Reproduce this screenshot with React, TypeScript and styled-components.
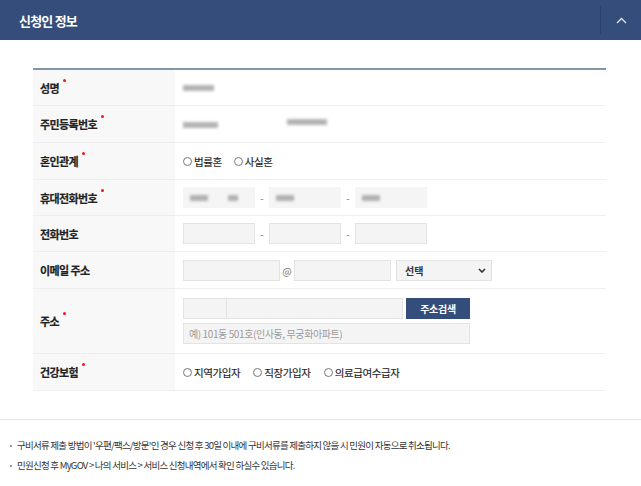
import React from 'react';
import styled, { createGlobalStyle } from 'styled-components';

const GlobalStyle = createGlobalStyle`
  html, body {
    margin: 0;
    padding: 0;
    background: #fff;
    font-family: "Noto Sans CJK KR", "Noto Sans", sans-serif;
    color: #333;
  }
`;

const Page = styled.div`
  width: 641px;
  height: 486px;
  overflow: hidden;
  background: #fff;
`;

const Header = styled.div`
  height: 40px;
  background: #344d7b;
  display: flex;
  align-items: center;
  justify-content: space-between;
`;

const Title = styled.h2`
  margin: 0 0 0 19px;
  font-size: 13px;
  font-weight: 700;
  color: #fff;
  letter-spacing: -0.8px;
`;

const Toggle = styled.button`
  width: 41px;
  height: 28px;
  border: 0;
  border-left: 1px solid #2b4270;
  background: transparent;
  display: flex;
  align-items: center;
  justify-content: center;
  padding: 0;
  color: #e4e9f2;
`;

const Body = styled.div`
  padding: 28px 35px 28px 33px;
  border-bottom: 1px solid #e6e6e6;
`;

const Table = styled.div`
  border-top: 2px solid #8593ab;
`;

const Row = styled.div<{ $h?: number }>`
  box-sizing: border-box;
  display: grid;
  grid-template-columns: 142px 1fr;
  height: ${(p) => p.$h ?? 36}px;
  border-bottom: 1px solid #eeeeee;
`;

const Label = styled.div<{ $req?: boolean }>`
  background: #f8f8f8;
  display: flex;
  align-items: center;
  padding-left: 7px;
  font-size: 11px;
  font-weight: 700;
  color: #222;
  letter-spacing: -0.6px;
  -webkit-text-stroke: 0.2px #222;

  span {
    position: relative;
  }

  span::after {
    content: '';
    display: ${(p) => (p.$req ? 'block' : 'none')};
    position: absolute;
    right: -7px;
    top: -1px;
    width: 3px;
    height: 3px;
    border-radius: 50%;
    background: #f0141e;
  }
`;

const Cell = styled.div<{ $col?: boolean }>`
  display: flex;
  flex-direction: ${(p) => (p.$col ? 'column' : 'row')};
  align-items: ${(p) => (p.$col ? 'flex-start' : 'center')};
  justify-content: ${(p) => (p.$col ? 'center' : 'flex-start')};
  padding-left: 8px;
  gap: ${(p) => (p.$col ? '4px' : '0')};
  font-size: 10px;
  color: #444;
`;

const Blur = styled.span<{ $w: number; $dy?: number }>`
  display: inline-block;
  width: ${(p) => p.$w}px;
  height: 6px;
  background: #9a9a9a;
  filter: blur(1.6px);
  opacity: 0.75;
  margin-top: ${(p) => p.$dy ?? 0}px;
`;

const Input = styled.div<{ $w: number }>`
  box-sizing: border-box;
  width: ${(p) => p.$w}px;
  height: 21px;
  background: #f4f4f4;
  border: 1px solid #e3e3e3;
  display: flex;
  align-items: center;
  padding-left: 5px;
  font-size: 10px;
  color: #9a9a9a;
  letter-spacing: -0.4px;
`;

const FadedInput = styled(Input)`
  background: #f5f5f5;
  border-color: #f5f5f5;
  gap: 20px;
  padding-left: 6px;
`;

const Sep = styled.span<{ $w: number }>`
  width: ${(p) => p.$w}px;
  text-align: center;
  font-size: 10px;
  color: #777;
`;

const Select = styled.div`
  box-sizing: border-box;
  width: 96px;
  height: 21px;
  margin-left: 5px;
  background: #f4f4f4;
  border: 1px solid #e3e3e3;
  display: flex;
  align-items: center;
  justify-content: space-between;
  padding: 0 5px 0 8px;
  font-size: 10px;
  font-weight: 700;
  color: #333;
`;

const Line = styled.div`
  display: flex;
  align-items: center;
`;

const SearchButton = styled.button`
  width: 64px;
  height: 21px;
  margin-left: 3px;
  border: 0;
  background: #344d7b;
  color: #fff;
  font-family: inherit;
  font-size: 10px;
  font-weight: 700;
  letter-spacing: -0.3px;
  padding: 0;
`;

const Radios = styled.div<{ $gap: number }>`
  display: flex;
  align-items: center;
  gap: ${(p) => p.$gap}px;
`;

const Radio = styled.label`
  display: flex;
  align-items: center;
  gap: 2px;
  font-size: 10.5px;
  color: #222;
  letter-spacing: -0.4px;
  -webkit-text-stroke: 0.15px #222;

  i {
    width: 9px;
    height: 9px;
    border: 1px solid #777;
    border-radius: 50%;
    box-sizing: border-box;
  }
`;

const Notes = styled.ul`
  list-style: none;
  margin: 0;
  padding: 19px 0 0 10px;
  display: flex;
  flex-direction: column;
  gap: 7px;
`;

const Note = styled.li`
  font-size: 9.5px;
  color: #333;
  letter-spacing: -0.75px;
  line-height: 13px;
  display: flex;
  gap: 5px;

  &::before {
    content: '';
    width: 2px;
    height: 2px;
    margin-top: 6px;
    background: #999;
  }
`;

function Chevron() {
  return (
    <svg width="11" height="7" viewBox="0 0 11 7" fill="none">
      <path d="M1 6 L5.5 1.5 L10 6" stroke="currentColor" strokeWidth="1.3" />
    </svg>
  );
}

function Caret() {
  return (
    <svg width="8" height="5" viewBox="0 0 8 5" fill="none">
      <path d="M1 1 L4 4 L7 1" stroke="#333" strokeWidth="1.6" />
    </svg>
  );
}

export default function App() {
  return (
    <Page>
      <GlobalStyle />
      <Header>
        <Title>신청인 정보</Title>
        <Toggle aria-label="접기">
          <Chevron />
        </Toggle>
      </Header>
      <Body>
        <Table>
          <Row>
            <Label $req><span>성명</span></Label>
            <Cell>
              <Blur $w={31} />
            </Cell>
          </Row>
          <Row $h={37}>
            <Label $req><span>주민등록번호</span></Label>
            <Cell>
              <Blur $w={35} $dy={2} />
              <span style={{ width: 69 }} />
              <Blur $w={40} $dy={-5} />
            </Cell>
          </Row>
          <Row $h={37}>
            <Label $req><span>혼인관계</span></Label>
            <Cell>
              <Radios $gap={12}>
                <Radio><i />법률혼</Radio>
                <Radio><i />사실혼</Radio>
              </Radios>
            </Cell>
          </Row>
          <Row>
            <Label $req><span>휴대전화번호</span></Label>
            <Cell>
              <FadedInput $w={72}>
                <Blur $w={18} />
                <Blur $w={10} />
              </FadedInput>
              <Sep $w={14}>-</Sep>
              <FadedInput $w={72}>
                <Blur $w={18} />
              </FadedInput>
              <Sep $w={14}>-</Sep>
              <FadedInput $w={72}>
                <Blur $w={18} />
              </FadedInput>
            </Cell>
          </Row>
          <Row>
            <Label><span>전화번호</span></Label>
            <Cell>
              <Input $w={72} />
              <Sep $w={14}>-</Sep>
              <Input $w={72} />
              <Sep $w={14}>-</Sep>
              <Input $w={72} />
            </Cell>
          </Row>
          <Row $h={37}>
            <Label><span>이메일 주소</span></Label>
            <Cell>
              <Input $w={97} />
              <Sep $w={14}>@</Sep>
              <Input $w={97} />
              <Select>
                선택
                <Caret />
              </Select>
            </Cell>
          </Row>
          <Row $h={65}>
            <Label $req><span>주소</span></Label>
            <Cell $col>
              <Line>
                <Input $w={44} />
                <Input $w={176} style={{ borderLeftWidth: 0 }} />
                <SearchButton>주소검색</SearchButton>
              </Line>
              <Input $w={287}>예) 101동 501호(인사동, 무궁화아파트)</Input>
            </Cell>
          </Row>
          <Row $h={37}>
            <Label $req><span>건강보험</span></Label>
            <Cell>
              <Radios $gap={13}>
                <Radio><i />지역가입자</Radio>
                <Radio><i />직장가입자</Radio>
                <Radio><i />의료급여수급자</Radio>
              </Radios>
            </Cell>
          </Row>
        </Table>
      </Body>
      <Notes>
        <Note>
          구비서류 제출 방법이 '우편/팩스/방문'인 경우 신청 후 30일 이내에 구비서류를 제출하지 않을 시 민원이 자동으로 취소됩니다.
        </Note>
        <Note>민원신청 후 MyGOV &gt; 나의 서비스 &gt; 서비스 신청내역에서 확인 하실수 있습니다.</Note>
      </Notes>
    </Page>
  );
}
